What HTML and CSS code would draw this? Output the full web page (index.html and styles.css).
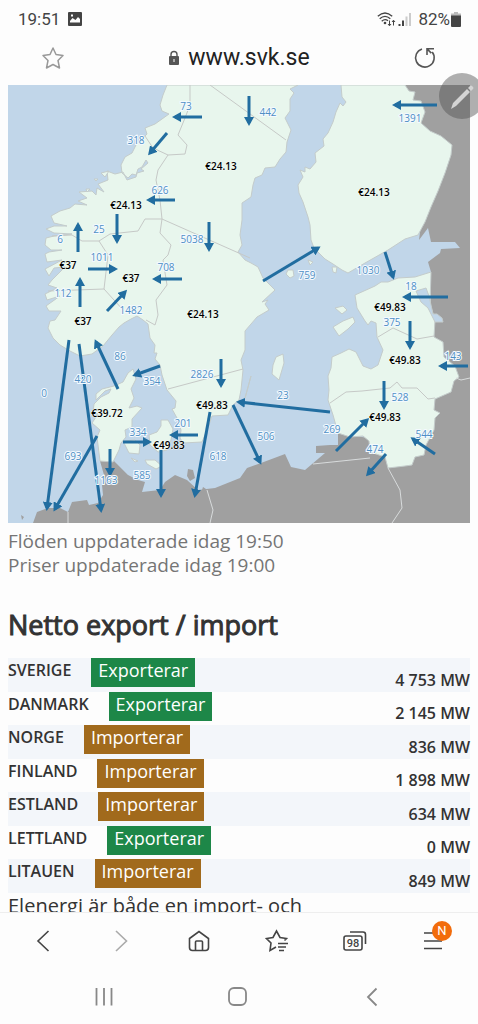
FILE: index.html
```html
<!DOCTYPE html>
<html lang="sv">
<head>
<meta charset="utf-8">
<meta name="viewport" content="width=device-width, initial-scale=1">
<title>Kontrollrummet</title>
<link rel="stylesheet" href="styles.css">
</head>
<body>
<header class="top">
  <div class="status">
    <div class="status-group">
      <span>19:51</span>
      <svg width="14" height="14" viewBox="0 0 14 14" aria-hidden="true"><path fill="#444" fill-rule="evenodd" d="M1 0h12q1 0 1 1v12q0 1-1 1H1q-1 0-1-1V1q0-1 1-1zM2 10.500h10V7L10 5 7.500 8 4.500 6 2 9zM3 2.500v2h2v-2z"/></svg>
    </div>
    <div class="status-group status-right">
      <svg width="35" height="15" viewBox="0 0 35 15" fill="none" stroke="#444" aria-hidden="true">
        <path stroke-width="1.300" d="M.800 4.300Q8-2.300 15.200 4.300M2.700 6.800Q8 2 13.300 6.800M4.700 9.200Q8 6.200 11 8.700"/>
        <circle cx="8" cy="11" r="1.300" fill="#444" stroke="none"/>
        <path d="M12.500 8.500v5M11 12l1.500 1.800L14 12M16.500 13.500v-5M15 10l1.500-1.800L18 10"/>
        <path stroke-width="2" d="M22.500 12v2M26 8.500V14"/><path stroke="#ccc" stroke-width="2" d="M29.500 4.500V14M33 1v13"/>
      </svg>
      <span>82%</span>
      <svg class="battery" width="10" height="15" viewBox="0 0 10 15" aria-hidden="true"><path fill="#bbb" d="M3 0h4v1.500h3V5H0V1.500h3z"/><path fill="#444" d="M0 3.500h10V14q0 1-1 1H1q-1 0-1-1z"/></svg>
    </div>
  </div>
  <div class="address">
    <button class="icon-button" aria-label="Bokmärke"><svg width="24" height="24" viewBox="0 0 24 24"><path fill="none" stroke="#999" stroke-width="1.500" stroke-linejoin="round" d="M12 2 15 8.500 22 9.500 17 14.500 18.500 22 12 18.500 5.500 22 7 14.500 2 9.500 9 8.500z"/></svg></button>
    <a class="site" href="#map"><svg width="12" height="16" viewBox="0 0 12 16" aria-hidden="true"><path fill="none" stroke="#555" stroke-width="1.400" d="M3 7V4.500a3 3 0 0 1 6 0V7"/><rect x="1" y="6" width="10" height="9" rx="1" fill="#555"/><path stroke="#fff" d="M6 9v3"/></svg>www.svk.se</a>
    <button class="icon-button" aria-label="Ladda om"><svg width="24" height="24" viewBox="0 0 24 24" fill="none" stroke="#555" stroke-width="1.600"><path d="M9 2.900A9.300 9.300 0 1 0 19.200 6M14 9V2.800H21M14.300 3.100l4 4"/></svg></button>
  </div>
</header>
<button class="edit" aria-label="Redigera"><svg width="46" height="46" viewBox="0 0 46 46"><path fill="#d4d4d4" d="M12 36l2-6L28 16l3 3-14 14zM29 15l2-2q1-1 2 0l1 1q1 1 0 2l-2 2z"/></svg></button>

<main class="content">
<svg id="map" class="map" viewBox="8 85 462 438" role="img" aria-label="Karta över kraftflöden">
  <defs><marker id="head" markerUnits="userSpaceOnUse" markerWidth="10" markerHeight="10" refX="6" refY="5" orient="auto"><path class="head" d="M0 0 9 5 0 10z"/></marker></defs>
  <rect class="sea" x="8" y="85" width="462" height="438"/>
  <path class="abroad" d="M405 85H470V523H33L37 512 48 508 60 508 68 512 72 502 87 500 89 505 98 503 103 495 102 485 104 475 100 461 114 461 128 475 138 480 145 482 142 492 160 490 165 482 175 475 187 480 198 490 215 488 240 478 247 468 261 463 285 454 291 467 305 470 325 453 316 453 316 446 330 445 338 445 338 433 380 440 430 350 431 272 428 262 440 253 441 249 460 248 455 242 431 242 428 228 419 240 424 200z"/>
  <path class="abroad" d="M188 469l5 1 2 8-5 3-3-5zM203 487l3 2-1 5-4-1zM21 515l3 2-2 3z"/>
  <path class="land" d="M167 85 163 95 160 105 162 111 169 114 155 124 145 128 147 134 136 145 132 153 125 157 121 165 122 173 128 178 132 174 136 175 138 169 142 167 146 160 148 163 141 169 144 171 137 173 136 177 127 180 123 172 115 174 107 171 108 180 98 184 104 192 97 188 96 195 92 191 79 192 87 198 78 201 87 205 75 204 70 208 60 211 51 216 54 223 67 226 54 226 46 229 54 233 72 234 54 236 46 238 45 245 51 250 62 250 49 252 45 254 47 262 62 260 45 269 49 276 54 268 65 267 52 280 48 285 57 288 45 294 47 300 60 296 46 306 49 311 61 311 55 320 50 321 48 328 53 338 60 345 70 351 80 356 92 354 103 346 112 335 119 327 124 323 131 319 137 316 143 320 148 324 150 338 155 345 154 353 157 353 155 359 160 365 162 375 167 390 176 401 175 408 172 409 177 418 181 430 180 438 183 443 202 442 208 428 212 416 228 415 233 405 239 400 241 390 243 370 241 360 245 350 245 331 257 317 269 310 265 304 268 300 262 302 275 290 263 278 258 267 251 263 245 260 238 252 242 245 240 235 242 220 242 203 251 197 253 185 255 178 262 175 265 168 275 167 280 159 286 152 287 142 291 130 285 118 290 111 290 99 294 93 290 89 298 85z"/>
  <path class="land" d="M341 85 342 97 346 102 343 106 340 103 336 112 333 122 328 133 323 139 324 146 315 153 316 162 310 169 305 167 305 172 300 170 303 177 298 185 299 193 303 202 308 217 310 225 311 240 314 248 325 259 333 264 342 270 348 273 365 263 388 250 405 239 418 235 425 222 431 207 438 191 445 173 451 155 452 145 441 136 430 131 421 123 425 112 421 101 413 100 415 92 409 91 405 85z"/>
  <path class="land" d="M431 272 415 277 398 278 388 282 381 282 375 286 355 295 357 308 365 321 368 325 371 321 376 323 377 337 383 350 378 365 371 369 363 366 360 360 356 352 349 349 341 353 332 357 331 368 328 376 329 390 328 400 333 415 338 433 350 437 363 436 369 441 370 452 385 457 388 468 405 466 412 465 415 457 424 455 426 445 434 430 435 418 440 413 434 410 435 399 451 392 454 381 459 377 455 366 444 357 443 342 434 337 435 320 430 304z"/>
  <path class="land" d="M133 369 128 373 123 382 114 386 102 389 96 394 96 400 105 391 111 389 109 393 101 397 94 404 93 412 98 414 92 423 100 430 97 437 100 461 113 462 119 450 121 443 126 437 125 430 132 427 132 419 142 408 137 406 129 408 134 398 131 389 136 379zM149 435 157 432 161 426 161 420 168 420 173 429 171 440 167 450 158 452 150 445zM123 441 135 440 140 445 139 454 129 453zM145 460 155 460 162 466 156 469 147 464zM131 458l7 3-3 1z"/>
  <path class="land" d="M273 365 276 357 283 354 284 363 279 380 272 374zM251 376 245 398 247 391zM333 327 343 321 353 317 355 322 348 329 339 336zM335 308 343 306 347 310 342 314zM288 270l5 0 1 6-4 2-4-4zM332 267l5 0-1 6-3-1zM308 260l5 2-3 3zM101 173l8-2-4 6zM94 179l4-0-2 2zM86 189l4 0-3 3z"/>
  <path class="lake" d="M416 291 426 288 429 296 433 314 437 314 442 318 443 322 435 322 428 308 421 302z"/>
  <path class="border" d="M190 85V105L185 118 178 135 187 145 185 154 168 155 158 170 156 180 160 200 162 219 160 233 171 245 168 255 163 260 167 285 156 300 158 315 155 325 146 320M145 136 153 148 168 155M210 85 286 140M162 219 250 258M162 219 145 219 138 231 110 234 99 241 82 241 72 235 52 236M99 241 108 255 104 289 124 311M48 291 104 289M168 389 243 369M378 337 393 328 417 339 434 336M330 403 346 392 362 391 390 388 397 382 402 388 417 388 428 399 435 398"/>
  <path class="border-light" d="M313 464 370 458M388 468 400 490 402 508 392 523M207 490 213 510 210 523M68 512V523M456 378l5 2 9-2"/>
  <g class="flows">
    <path d="M202 117H175"/><path d="M167 133 150 153"/><path d="M249 96V123"/><path d="M437 105H395"/><path d="M175 200H149"/><path d="M117 214V241"/><path d="M78 252V225"/><path d="M88 269H115"/><path d="M80 307V280"/><path d="M107 311 125 292"/><path d="M182 279H155"/><path d="M209 222V249"/>
    <path d="M263 281 318 248"/><path d="M385 252 393 277"/><path d="M448 297H405"/><path d="M410 321V347"/><path d="M468 366H441"/><path d="M384 381V407"/><path d="M435 454 413 439"/><path d="M336 451 367 420"/><path d="M386 454 368 474"/><path d="M330 412 239 402"/><path d="M233 405 260 462"/><path d="M210 412 195 495"/><path d="M221 359V385"/><path d="M198 435H172"/><path d="M123 442H149"/><path d="M161 450V495"/><path d="M160 366 135 375"/><path d="M118 389 96 342"/><path d="M69 340 47 508"/><path d="M79 344 101 510"/><path d="M97 436 55 509"/><path d="M110 449V474"/>
  </g>
  <g class="flow-label">
    <text x="186" y="110">73</text><text x="136" y="144">318</text><text x="268" y="116">442</text><text x="410" y="122">1391</text><text x="160" y="194">626</text><text x="99" y="233">25</text><text x="60" y="243">6</text><text x="102" y="261">1011</text><text x="63" y="297">112</text><text x="131" y="314">1482</text><text x="166" y="271">708</text><text x="192" y="243">5038</text><text x="307" y="279">759</text><text x="368" y="274">1030</text><text x="411" y="290">18</text><text x="392" y="326">375</text><text x="453" y="360">143</text><text x="400" y="401">528</text><text x="424" y="438">544</text><text x="332" y="433">269</text><text x="375" y="453">474</text><text x="283" y="399">23</text><text x="266" y="440">506</text><text x="218" y="460">618</text><text x="202" y="378">2826</text><text x="183" y="427">201</text><text x="138" y="436">334</text><text x="142" y="479">585</text><text x="152" y="385">354</text><text x="120" y="360">86</text><text x="44" y="397">0</text><text x="83" y="383">420</text><text x="73" y="460">693</text><text x="106" y="484">1163</text>
  </g>
  <g class="price">
    <text x="221" y="170">€24.13</text><text x="126" y="209">€24.13</text><text x="203" y="318">€24.13</text><text x="374" y="196">€24.13</text><text x="68" y="269">€37</text><text x="131" y="282">€37</text><text x="83" y="325">€37</text><text x="390" y="311">€49.83</text><text x="405" y="364">€49.83</text><text x="385" y="421">€49.83</text><text x="212" y="409">€49.83</text><text x="169" y="449">€49.83</text><text x="107" y="417">€39.72</text>
  </g>
</svg>
<p class="updated">Flöden uppdaterade idag 19:50<br>Priser uppdaterade idag 19:00</p>
<h1 class="title">Netto export / import</h1>
<table class="balance">
  <tbody>
  <tr><th scope="row">SVERIGE<span class="badge export">Exporterar</span></th><td>4 753 MW</td></tr>
  <tr><th scope="row">DANMARK<span class="badge export">Exporterar</span></th><td>2 145 MW</td></tr>
  <tr><th scope="row">NORGE<span class="badge import">Importerar</span></th><td>836 MW</td></tr>
  <tr><th scope="row">FINLAND<span class="badge import">Importerar</span></th><td>1 898 MW</td></tr>
  <tr><th scope="row">ESTLAND<span class="badge import">Importerar</span></th><td>634 MW</td></tr>
  <tr><th scope="row">LETTLAND<span class="badge export">Exporterar</span></th><td>0 MW</td></tr>
  <tr><th scope="row">LITAUEN<span class="badge import">Importerar</span></th><td>849 MW</td></tr>
  </tbody>
</table>
<p class="lead">Elenergi är både en import- och</p>
</main>

<footer class="bottom">
  <nav class="toolbar" aria-label="Webbläsare">
    <button class="icon-button" aria-label="Bakåt"><svg width="24" height="24" viewBox="0 0 24 24"><path class="line" d="M17.500 2 7 12 17.500 22"/></svg></button>
    <button class="icon-button" aria-label="Framåt"><svg width="24" height="24" viewBox="0 0 24 24"><path class="line faint" d="M7 2 17.500 12 7 22"/></svg></button>
    <button class="icon-button" aria-label="Hem"><svg width="24" height="24" viewBox="0 0 24 24"><path class="line" d="M2.500 9.500 12 2.500 21.500 9.500V18.500a3 3 0 0 1-3 3H5.500a3 3 0 0 1-3-3zM8.500 21V13a1 1 0 0 1 1-1h5a1 1 0 0 1 1 1v8"/></svg></button>
    <button class="icon-button" aria-label="Bokmärken"><svg width="24" height="24" viewBox="0 0 24 24"><path class="line" d="M11 18 5 21.500 6 14 1.500 9.500 8 8.500 11.500 2 15 8.500 21.500 9.500 19.500 11.500M13 14.500H23M13 18H21M14 21.500H19"/></svg></button>
    <button class="icon-button" aria-label="Flikar"><svg width="24" height="24" viewBox="0 0 24 24"><rect class="line" x="1" y="7" width="18" height="14" rx="2"/><path class="line" d="M7 3H20a2.500 2.500 0 0 1 2.500 2.500V15"/><text class="tab-count" x="10" y="18">98</text></svg></button>
    <button class="icon-button menu" aria-label="Meny"><svg width="24" height="24" viewBox="0 0 24 24"><path class="line" d="M3 4H21M3 12H21M3 19.500H21"/></svg><span class="notice">N</span></button>
  </nav>
  <nav class="system" aria-label="System">
    <button class="icon-button" aria-label="Senaste"><svg width="24" height="24" viewBox="0 0 24 24"><path class="sys" d="M4.500 3V20.500M12 3V20.500M19.500 3V20.500"/></svg></button>
    <button class="icon-button" aria-label="Startskärm"><svg width="24" height="24" viewBox="0 0 24 24"><rect class="sys" x="3" y="3" width="17" height="17" rx="5"/></svg></button>
    <button class="icon-button" aria-label="Tillbaka"><svg width="24" height="24" viewBox="0 0 24 24"><path class="sys" d="M16.500 3.500 8 12 16.500 20.500"/></svg></button>
  </nav>
</footer>
</body>
</html>
```
FILE: styles.css
```css
* { box-sizing: border-box; }
body {
  margin: 0;
  height: 100vh;
  display: flex;
  flex-direction: column;
  position: relative;
  overflow: hidden;
  background: #fdfdfd;
  color: #333;
  font-family: "Open Sans", "Noto Sans", sans-serif;
}
.icon-button {
  display: flex;
  align-items: center;
  justify-content: center;
  width: 24px;
  height: 24px;
  padding: 0;
  border: 0;
  background: none;
}
.top { font-family: Roboto, sans-serif; }
.status {
  display: flex;
  justify-content: space-between;
  padding: 8px 17px 0 18px;
  height: 33px;
  line-height: 22px;
  font-size: 17px;
  color: #444;
}
.status-group { display: flex; align-items: center; gap: 8px; height: 22px; }
.status-right { gap: 6px; }
.battery { margin-left: -5px; }
.address {
  display: flex;
  align-items: center;
  justify-content: space-between;
  height: 52px;
  padding: 0 41px 2px;
}
.site {
  display: flex;
  align-items: center;
  gap: 8px;
  color: #222;
  font-size: 23px;
  line-height: 28px;
  text-decoration: none;
}
.edit {
  position: absolute;
  top: 73px;
  right: -7px;
  width: 46px;
  height: 46px;
  padding: 0;
  border: 0;
  border-radius: 50%;
  background: rgba(80, 80, 80, 0.45);
}
.content { flex: 1; min-height: 0; overflow: hidden; padding: 0 8px; }
.map { display: block; width: 100%; }
.sea { fill: #c1d6e9; }
.abroad { fill: #a0a0a0; }
.land { fill: #e8f6ed; stroke: #c4cccb; }
.lake { fill: #c1d6e9; stroke: #c4cccb; }
.border { fill: none; stroke: #c6c9c7; }
.border-light { fill: none; stroke: #d8dbdc; }
.flows { fill: none; stroke: #216da0; stroke-width: 3px; }
.flows path { marker-end: url(#head); }
.flows .head, .head { fill: #216da0; stroke: none; }
.flow-label, .price { font-size: 10px; text-anchor: middle; }
.flow-label { fill: #4f8fc4; stroke: #f4faff; stroke-width: 2px; paint-order: stroke; }
.price { fill: #000; font-weight: 600; stroke: #f4faf6; stroke-width: 1px; paint-order: stroke; }
.updated { margin: 6px 0 0; color: #757575; font-size: 19px; line-height: 24px; }
.title {
  margin: 31px 0 16px;
  font-size: 27px;
  font-weight: 400;
  line-height: 34px;
  -webkit-text-stroke: 1px #333;
}
.balance { width: 100%; border-collapse: collapse; }
.balance tr { height: 33px; }
.balance tr:nth-child(odd) { height: 34px; background: #f3f6fa; }
.balance th, .balance td { padding: 0; font-size: 16px; font-weight: 600; line-height: 24px; }
.balance th { text-align: left; vertical-align: top; }
.balance td { text-align: right; vertical-align: bottom; }
.badge {
  display: inline-block;
  height: 29px;
  margin-left: 20px;
  padding: 0 7px;
  color: #fff;
  font-size: 18px;
  font-weight: 400;
  line-height: 25px;
  vertical-align: top;
}
.export { background: #1d8748; }
.import { background: #a16a1c; }
.lead { margin: 0; font-size: 20px; line-height: 26px; }
.bottom { border-top: 1px solid #eee; background: #fdfdfd; }
.toolbar, .system { display: flex; align-items: center; justify-content: space-between; }
.toolbar { height: 56px; padding: 0 33px 0 31px; }
.system { height: 55px; padding: 0 94px 0 92px; }
.line { fill: none; stroke: #444; stroke-width: 1.6px; }
.faint { stroke: #aaa; }
.sys { fill: none; stroke: #888; stroke-width: 1.8px; }
.tab-count { font: 500 11px Roboto, sans-serif; fill: #444; text-anchor: middle; }
.menu { position: relative; }
.notice {
  position: absolute;
  top: -8px;
  left: 11px;
  width: 20px;
  height: 20px;
  border-radius: 50%;
  background: #f26c0c;
  color: #fff;
  font: 13px/20px Roboto, sans-serif;
}
```
